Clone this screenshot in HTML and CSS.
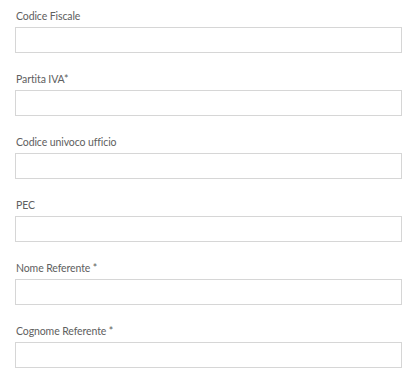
FILE: index.html
```html
<!DOCTYPE html>
<html lang="it">
<head>
    <meta charset="UTF-8">
    <title>Dati ente</title>
    <meta name="viewport" content="width=device-width, initial-scale=1">
    <link rel="stylesheet" href="styles.css">
</head>
<body>
    <form class="form-ente" autocomplete="off">
        <div class="campo"><label for="cf">Codice Fiscale</label><input id="cf" type="text"></div>
        <div class="campo"><label for="piva">Partita IVA*</label><input id="piva" type="text"></div>
        <div class="campo"><label for="cuu">Codice univoco ufficio</label><input id="cuu" type="text"></div>
        <div class="campo"><label for="pec">PEC</label><input id="pec" type="email"></div>
        <div class="campo"><label for="nome">Nome Referente *</label><input id="nome" type="text"></div>
        <div class="campo"><label for="cognome">Cognome Referente *</label><input id="cognome" type="text"></div>
    </form>
</body>
</html>
```

FILE: styles.css
```css
body {
    margin: 0;
    padding: 0;
    background: #fff;
    font-family: Lato, 'Noto Sans', Arial, sans-serif;
    color: #606060;
    overflow: hidden;
}
.form-ente {
    padding: 8px 10px 0 15px;
    display: flex;
    flex-direction: column;
    gap: 18px;
}
.campo {
    display: flex;
    flex-direction: column;
    gap: 3px;
}
label {
    font-size: 10.5px;
    line-height: 16px;
    letter-spacing: -0.1px;
    padding-left: 1px;
}
input {
    box-sizing: border-box;
    width: 100%;
    height: 26px;
    margin: 0;
    border: 1px solid #d6d6d6;
    border-radius: 0;
    background: #fff;
    font: inherit;
    font-size: 12px;
    padding: 0 8px;
    outline: none;
}
input:focus {
    border-color: #9bb8d9;
}
```
